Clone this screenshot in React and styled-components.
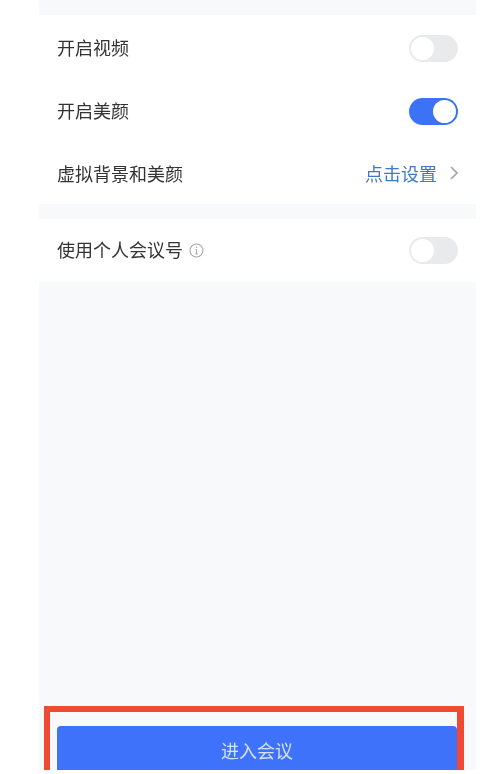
import React from "react";
import styled, { createGlobalStyle } from "styled-components";

const GlobalStyle = createGlobalStyle`
  html, body {
    margin: 0;
    padding: 0;
    background: #ffffff;
    font-family: "Noto Sans CJK SC", "Liberation Sans", sans-serif;
  }
`;

const Page = styled.div`
  width: 494px;
  height: 774px;
  overflow: hidden;
  background: #ffffff;
`;

const Phone = styled.div`
  display: flex;
  flex-direction: column;
  width: 437px;
  height: 770px;
  margin-left: 39px;
  padding-top: 3px;
  box-sizing: border-box;
  overflow: hidden;
  background: #f7f9fb;
  filter: blur(0.55px);
`;

const Section = styled.div`
  display: flex;
  flex-direction: column;
  height: ${(p) => p.$height}px;
  margin-top: ${(p) => p.$gap}px;
  padding-top: ${(p) => p.$offset || 0}px;
  box-sizing: border-box;
  background: #ffffff;
`;

const Row = styled.div`
  display: flex;
  flex: none;
  align-items: center;
  justify-content: space-between;
  height: 63px;
  padding: 0 18px;
`;

const Label = styled.div`
  display: flex;
  align-items: center;
  gap: 6px;
  padding-bottom: 3px;
  font-size: 18px;
  line-height: 26px;
  color: #333336;
`;

const Toggle = styled.div`
  display: flex;
  justify-content: ${(p) => (p.$on ? "flex-end" : "flex-start")};
  width: 49px;
  height: 27px;
  padding: 2px;
  box-sizing: border-box;
  border-radius: 14px;
  background: ${(p) => (p.$on ? "#3b72f6" : "#e9eaec")};
`;

const Knob = styled.span`
  width: 23px;
  height: 23px;
  border-radius: 50%;
  background: #ffffff;
`;

const Action = styled.div`
  display: flex;
  align-items: center;
  gap: 13px;
  padding-bottom: 3px;
  font-size: 18px;
  line-height: 26px;
  color: #3f78c8;
`;

const Footer = styled.div`
  position: relative;
  flex: none;
  margin-top: auto;
  height: 64px;
  padding: 20px 19px 0 18px;
  box-sizing: border-box;
`;

const EnterButton = styled.div`
  display: flex;
  justify-content: center;
  height: 60px;
  padding-top: 11px;
  box-sizing: border-box;
  border-radius: 4px 4px 0 0;
  background: #3f72fb;
  font-size: 18px;
  line-height: 26px;
  color: #d5e0fb;
`;

const Highlight = styled.div`
  position: absolute;
  top: 0;
  left: 5px;
  width: 420px;
  height: 64px;
  box-sizing: border-box;
  border: solid #f04a35;
  border-width: 6px 7px 0 6px;
`;

const InfoMark = styled.svg`
  margin-top: 3px;
`;

const InfoIcon = () => (
  <InfoMark width="15" height="15" viewBox="0 0 15 15" fill="none" stroke="#a9a9ab">
    <circle cx="7.5" cy="7.5" r="6.5" strokeWidth="1.1" />
    <path d="M7.5 6.5v4.5M6.3 11h2.4M6.5 6.5h1" strokeWidth="1.1" />
    <circle cx="7.5" cy="4.2" r="0.8" fill="#a9a9ab" stroke="none" />
  </InfoMark>
);

const ChevronIcon = () => (
  <svg width="8" height="14" viewBox="0 0 8 14" fill="none" stroke="#a4a6aa" strokeWidth="1.7">
    <path d="M1 1l6 6-6 6" />
  </svg>
);

const App = () => {
  return (
    <Page>
      <GlobalStyle />
      <Phone>
        <Section $gap={12} $height={189} $offset={2}>
          <Row>
            <Label>开启视频</Label>
            <Toggle>
              <Knob />
            </Toggle>
          </Row>
          <Row>
            <Label>开启美颜</Label>
            <Toggle $on>
              <Knob />
            </Toggle>
          </Row>
          <Row>
            <Label>虚拟背景和美颜</Label>
            <Action>
              点击设置
              <ChevronIcon />
            </Action>
          </Row>
        </Section>
        <Section $gap={15} $height={63}>
          <Row>
            <Label>
              使用个人会议号
              <InfoIcon />
            </Label>
            <Toggle>
              <Knob />
            </Toggle>
          </Row>
        </Section>
        <Footer>
          <EnterButton>进入会议</EnterButton>
          <Highlight />
        </Footer>
      </Phone>
    </Page>
  );
};

export default App;
